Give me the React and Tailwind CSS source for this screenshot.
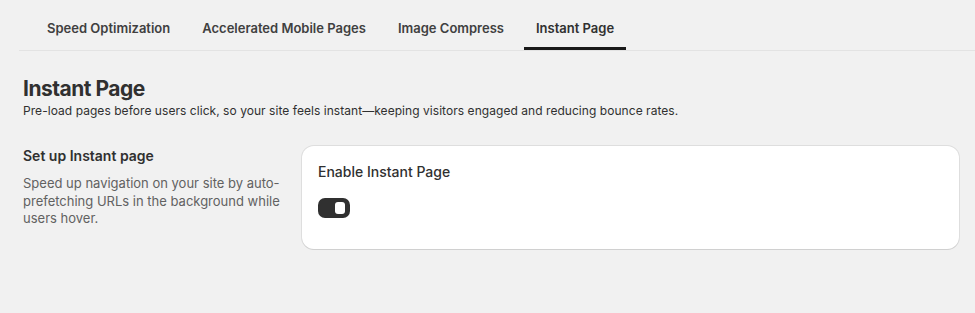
export default function App() {
  const tabs = ["Speed Optimization", "Accelerated Mobile Pages", "Image Compress", "Instant Page"];
  return (
    <div className="min-h-[313px] w-full bg-[#f1f1f1] text-[#303030]" style={{ fontFamily: "Inter, 'Noto Sans', sans-serif" }}>
      <div className="ml-[19px] flex gap-[8px] border-b border-[#e3e3e3] pl-[16px]">
        {tabs.map((t, i) => (
          <div key={t} className="flex flex-col">
            <div className={`px-[12px] pt-[19px] pb-[10px] text-[13px] font-semibold leading-[18px] ${i === 3 ? "text-[#303030]" : "text-[#404040]"}`}>
              {t}
            </div>
            <div className={i === 3 ? "h-[3px] bg-[#1a1a1a]" : "h-[3px]"} />
          </div>
        ))}
      </div>
      <div className="px-[23px] pt-[26px]">
        <h1 className="text-[21px] font-bold leading-[24px] tracking-[-0.5px] text-[#303030]">Instant Page</h1>
        <p className="mt-[1px] text-[12px] leading-[18px] tracking-[0.05px] text-[#303030]">
          Pre-load pages before users click, so your site feels instant—keeping visitors engaged and reducing bounce rates.
        </p>
        <div className="mt-[26px] flex gap-[22px]">
          <div className="w-[257px] shrink-0">
            <h2 className="text-[14px] font-semibold leading-[20px] text-[#303030]">Set up Instant page</h2>
            <p className="mt-[9px] text-[13px] leading-[17.5px] text-[#616161]">
              Speed up navigation on your site by auto-prefetching URLs in the background while users hover.
            </p>
          </div>
          <div className="mr-[-7px] flex-1 rounded-[12px] bg-white px-[16px] pt-[16px] pb-[31px] shadow-[0_1px_0_0_rgba(26,26,26,0.07),0_0_0_1px_rgba(0,0,0,0.08)]">
            <div className="text-[14px] font-medium leading-[20px] text-[#303030]">Enable Instant Page</div>
            <div className="mt-[16px] flex h-[20px] w-[32px] items-center justify-end rounded-[7px] bg-[#303030] pr-[5px]">
              <div className="h-[12px] w-[10px] rounded-[3px] bg-white" />
            </div>
          </div>
        </div>
      </div>
    </div>
  );
}
